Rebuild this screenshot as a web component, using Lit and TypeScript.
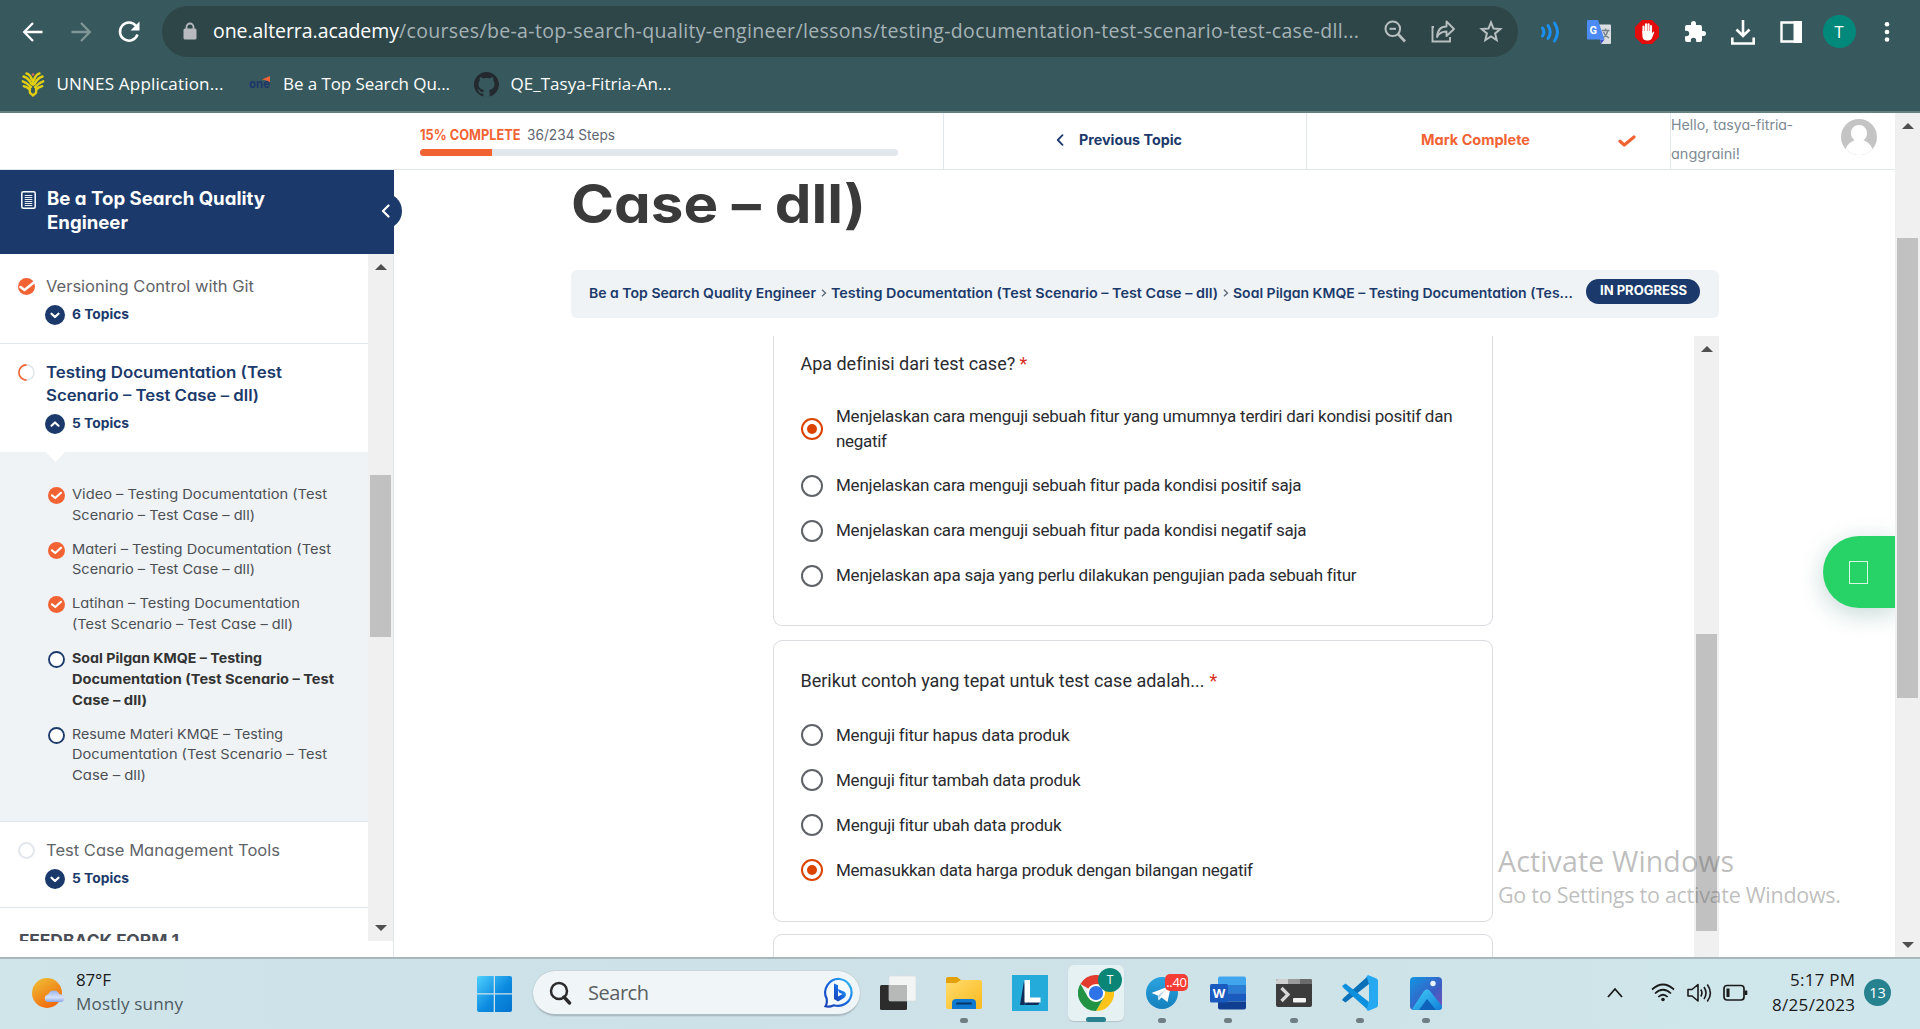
import { LitElement, html, css, nothing } from "lit";
import { customElement } from "lit/decorators.js";

/**
 * One line of text that fills a given width. The glyphs are tracked by default;
 * where --stretch is set they are widened instead.
 */
@customElement("fit-text")
class FitText extends LitElement {
  static properties = { text: {}, w: { type: Number } };
  declare text: string;
  declare w: number;
  static styles = css`
    :host { display: block; flex: none; white-space: pre; }
    span { display: inline-block; vertical-align: top; line-height: inherit; transform-origin: 0 50%; }
  `;
  render() {
    return html`<span>${this.text}</span>`;
  }
  updated() {
    const s = this.renderRoot.querySelector("span") as HTMLElement;
    this.style.width = `${this.w}px`;
    s.style.letterSpacing = "0px";
    s.style.transform = "none";
    const natural = s.getBoundingClientRect().width;
    if (getComputedStyle(this).getPropertyValue("--stretch").trim() === "1") {
      s.style.transform = `scaleX(${(this.w / natural).toFixed(5)})`;
      return;
    }
    const n = Math.max(1, [...this.text].length - 1);
    s.style.letterSpacing = `${((this.w - natural) / n).toFixed(4)}px`;
  }
}

const fit = (text: string, w: number, cls = "") => html`<fit-text class=${cls} .text=${text} .w=${w}></fit-text>`;

type Line = [string, number];

const icons = {
  back: html`<svg width="24" height="24" viewBox="0 0 24 24"><path d="M21.500 12H3.500M12 3 3.200 12 12 21" fill="none" stroke="#fff" stroke-width="2.300"/></svg>`,
  fwd: html`<svg width="24" height="24" viewBox="0 0 24 24"><path d="M2.500 12H20.500M12 3 20.800 12 12 21" fill="none" stroke="#809698" stroke-width="2.300"/></svg>`,
  reload: html`<svg width="26" height="26" viewBox="0 0 26 26"><path d="M21.500 15.500A9 9 0 1 1 20 7" fill="none" stroke="#fff" stroke-width="2.500"/><path d="M23.500 2.500V11.500H14.500Z" fill="#fff"/></svg>`,
  lock: html`<svg width="14" height="18" viewBox="0 0 14 18"><path d="M3.500 8V5a3.500 3.500 0 0 1 7 0V8" fill="none" stroke="#b8babf" stroke-width="1.800"/><rect x=".5" y="6.500" width="13" height="11" rx="1.500" fill="#b8babf"/></svg>`,
  zoomOut: html`<svg width="24" height="24" viewBox="0 0 24 24" fill="none" stroke="#b7bfc0" stroke-width="2"><circle cx="9.800" cy="9.800" r="7.300"/><path d="M15 15 22 22.500" stroke-width="2.600"/><path d="M6.500 9.800H13"/></svg>`,
  share: html`<svg width="26" height="26" viewBox="0 0 26 26" fill="none" stroke="#b7bfc0" stroke-width="1.900"><path d="M4 9H2.500V23.500H20V19"/><path d="M7 19C7.500 12 11 8.500 16.500 8.500V3.500L24 11 16.500 18V13.500C12 13.500 9 15 7 19Z" stroke-linejoin="round"/></svg>`,
  star: html`<svg width="24" height="24" viewBox="0 0 24 24" fill="none" stroke="#b7bfc0" stroke-width="2"><path d="M12 3.300 14.500 9.500 21.300 10 16.100 14.400 17.700 21 12 17.400 6.300 21 7.900 14.400 2.700 10 9.500 9.500Z"/></svg>`,
  waves: html`<svg width="24" height="24" viewBox="0 0 24 24" fill="none" stroke="#1a90f5" stroke-width="3" stroke-linecap="round"><path d="M3.500 8Q6.500 12 3.500 16M9 5.500Q13.500 12 9 18.500M15.500 3Q21.500 12 15.500 21"/></svg>`,
  translate: html`<svg width="26" height="26" viewBox="0 0 26 26"><path d="M11 5.500H24a1 1 0 0 1 1 1V24a1 1 0 0 1-1 1H15Z" fill="#dadce0"/><path d="M14 20.500H18.500L15 25Z" fill="#3a50c0"/><path d="M2 1H12L18.500 20.500H2a1 1 0 0 1-1-1V2A1 1 0 0 1 2 1Z" fill="#4c8bf5"/><text x="3.500" y="14.500" font-family="Roboto" font-weight="700" font-size="11" fill="#fff">G</text><path d="M16 11.500H23.500M19.500 9.500V11.500M22 11.500Q21 16 17.500 18.500M17.500 13Q19 17 23 19" fill="none" stroke="#6f7f84" stroke-width="1.300"/></svg>`,
  block: html`<svg width="26" height="26" viewBox="0 0 26 26"><path d="M8 1H18L25 8V18L18 25H8L1 18V8Z" fill="#e40d0d"/><g stroke="#fff" stroke-width="2.100" stroke-linecap="round"><path d="M9.500 14V7.500M12 13V5.200M14.500 13V5.200M17 14V7"/></g><path d="M8.400 12H18V14.500L19.300 12.500 20.300 13.300 17.800 19.500Q16.800 21.500 14 21.500H12.500Q8.400 21.300 8.400 16.500Z" fill="#fff"/></svg>`,
  puzzle: html`<svg width="24" height="24" viewBox="0 0 24 24"><path d="M20.500 11H19V7a2 2 0 0 0-2-2h-4V3.500a2.500 2.500 0 0 0-5 0V5H4a2 2 0 0 0-2 2v3.800h1.500a2.700 2.700 0 0 1 0 5.400H2V20a2 2 0 0 0 2 2h3.800v-1.500a2.700 2.700 0 0 1 5.400 0V22H17a2 2 0 0 0 2-2v-4h1.500a2.500 2.500 0 0 0 0-5z" fill="#fff"/></svg>`,
  download: html`<svg width="26" height="26" viewBox="0 0 26 26" fill="none" stroke="#fff" stroke-width="2.600"><path d="M13 1V16M6.500 10.500 13 17 19.500 10.500M2.300 18.500V24.500H23.700V18.500"/></svg>`,
  panel: html`<svg width="22" height="22" viewBox="0 0 22 22"><path d="M1.500 1.500H20.500V20.500H1.500Z" fill="none" stroke="#fff" stroke-width="2.400"/><path d="M13.500 0H22V22H13.500Z" fill="#fff"/></svg>`,
  dots: html`<svg width="6" height="22" viewBox="0 0 6 22" fill="#fff"><circle cx="3" cy="3.300" r="2.300"/><circle cx="3" cy="11" r="2.300"/><circle cx="3" cy="18.500" r="2.300"/></svg>`,
  unnes: html`<svg width="24" height="26" viewBox="0 0 24 26" fill="none" stroke="#e3cf12" stroke-width="2.400" stroke-linecap="round"><path d="M11 9Q9 3 5.500 2.500M10.500 13Q7 6.500 2.500 5.500M10 16Q6 11.500 1.800 10.300M9 18.500Q6 16 2.800 15.200M13 9Q15 3 18.500 2.500M13.500 13Q17 6.500 21.500 5.500M14 16Q18 11.500 22.200 10.300M15 18.500Q18 16 21.200 15.200"/><path d="M8.500 17 9 22 12 24.500 15 22 15.500 17" stroke-width="2.300"/><path d="M12 9V14" stroke-width="2.200"/><circle cx="12" cy="3.500" r="1.300" fill="#e06a5a" stroke="none"/></svg>`,
  one: html`<svg width="24" height="24" viewBox="0 0 24 24"><text x="1" y="15.500" font-family="Inter" font-weight="700" font-size="12.500" textLength="21" lengthAdjust="spacingAndGlyphs" fill="#1c3768">one</text><path d="M14 7.500 22 4V10L18.500 8.500Z" fill="#ef6335"/></svg>`,
  github: html`<svg width="25" height="25" viewBox="0 0 16 16"><path fill="#24292f" d="M8 0C3.580 0 0 3.580 0 8c0 3.540 2.290 6.530 5.470 7.590.4.070.55-.17.55-.38 0-.19-.01-.82-.01-1.490-2.010.37-2.530-.49-2.690-.94-.09-.23-.48-.94-.82-1.130-.28-.15-.68-.52-.01-.53.63-.01 1.080.58 1.230.82.720 1.210 1.870.87 2.330.66.070-.52.280-.87.510-1.070-1.780-.2-3.640-.89-3.640-3.950 0-.87.310-1.590.82-2.150-.08-.2-.36-1.020.08-2.120 0 0 .67-.21 2.200.82.640-.18 1.320-.27 2-.27s1.360.09 2 .27c1.530-1.040 2.200-.82 2.200-.82.440 1.100.16 1.920.08 2.120.51.560.82 1.270.82 2.150 0 3.070-1.870 3.750-3.650 3.950.29.250.54.730.54 1.480 0 1.070-.01 1.930-.01 2.200 0 .21.150.46.550.38A8.010 8.010 0 0 0 16 8c0-4.420-3.580-8-8-8z"/></svg>`,
  check: html`<svg width="18" height="12" viewBox="0 0 18 12"><path d="M2 6.300 6.300 10 16 2" fill="none" stroke="#f26334" stroke-width="3.200" stroke-linecap="round" stroke-linejoin="round"/></svg>`,
  doc: html`<svg width="15" height="18" viewBox="0 0 15 18" fill="none" stroke="#fff"><rect x=".8" y=".8" width="13.400" height="16.400" rx="1.500" stroke-width="1.500"/><path d="M3.700 4.500H11.300M3.700 6.500H11.300M3.700 8.500H11.300M3.700 10.500H11.300M3.700 12.500H11.300M3.700 14.500H11.300" stroke-width=".9"/></svg>`,
  done: html`<svg width="17" height="17" viewBox="0 0 17 17"><circle cx="8.500" cy="8.500" r="8.500" fill="#f26334"/><path d="M4 8.300 7.300 11 13 5.800" fill="none" stroke="#fff" stroke-width="2.200" stroke-linecap="round" stroke-linejoin="round"/></svg>`,
  doneBig: html`<svg width="17" height="17" viewBox="0 0 17 17"><circle cx="8.500" cy="8.500" r="8.500" fill="#f26334"/><path d="M2.500 9 6.500 12 15.500 4.800" fill="none" stroke="#fff" stroke-width="2.600" stroke-linecap="round" stroke-linejoin="round"/></svg>`,
  half: html`<svg width="17" height="17" viewBox="0 0 17 17" fill="none" stroke-width="1.600"><circle cx="8.500" cy="8.500" r="7.600" stroke="#e2e7ed"/><path d="M8.500 .9A7.600 7.600 0 0 0 8.500 16.100" stroke="#f26334"/></svg>`,
  none: html`<svg width="17" height="17" viewBox="0 0 17 17"><circle cx="8.500" cy="8.500" r="7.500" fill="#fff" stroke="#e2e7ed" stroke-width="2"/></svg>`,
  todo: html`<svg width="17" height="17" viewBox="0 0 17 17"><circle cx="8.500" cy="8.500" r="7.500" fill="#fff" stroke="#1b3a6b" stroke-width="1.900"/></svg>`,
  up: html`<svg width="20" height="20" viewBox="0 0 20 20"><circle cx="10" cy="10" r="10" fill="#1b3a6b"/><path d="M6.500 11.700 10 8.500 13.500 11.700" fill="none" stroke="#fff" stroke-width="2.200" stroke-linecap="round" stroke-linejoin="round"/></svg>`,
  down: html`<svg width="20" height="20" viewBox="0 0 20 20"><circle cx="10" cy="10" r="10" fill="#1b3a6b"/><path d="M6.500 8.700 10 12 13.500 8.700" fill="none" stroke="#fff" stroke-width="2.200" stroke-linecap="round" stroke-linejoin="round"/></svg>`,
  chevL: html`<svg width="9" height="14" viewBox="0 0 9 14"><path d="M7.500 1.500 2 7 7.500 12.500" fill="none" stroke="currentColor" stroke-width="2.200" stroke-linecap="round" stroke-linejoin="round"/></svg>`,
  chevThin: html`<svg width="8" height="12" viewBox="0 0 8 12"><path d="M6.500 1.200 1.800 6 6.500 10.800" fill="none" stroke="currentColor" stroke-width="1.800" stroke-linecap="round" stroke-linejoin="round"/></svg>`,
  person: html`<svg width="36" height="36" viewBox="0 0 36 36"><defs><clipPath id="av"><circle cx="18" cy="18" r="18"/></clipPath></defs><g clip-path="url(#av)"><path d="M0 0H36V36H0Z" fill="#c4c4c4"/><path d="M18 6C22.500 6 26 9.500 26 14 26 17.500 24.500 20 22.500 21.200 26 22.500 29.500 25 31 29L32.500 36H3.500L5 29C6.500 25 10 22.500 13.500 21.200 11.500 20 10 17.500 10 14 10 9.500 13.500 6 18 6Z" fill="#fff"/></g></svg>`,
  sun: html`<svg width="34" height="32" viewBox="0 0 34 32"><defs><linearGradient id="sn" x1="0" y1="0" x2=".6" y2="1"><stop offset="0" stop-color="#efc437"/><stop offset="1" stop-color="#f06a0c"/></linearGradient><linearGradient id="cl" x1="0" y1="0" x2="0" y2="1"><stop offset="0" stop-color="#9bb4ee"/><stop offset=".6" stop-color="#d6e2fb"/><stop offset="1" stop-color="#8ba6e6"/></linearGradient></defs><circle cx="15" cy="16" r="15" fill="url(#sn)"/><path d="M15.500 25a4 4 0 0 1 .7-7.700 6 6 0 0 1 11.200 0A4 4 0 0 1 29.500 25Z" fill="url(#cl)"/></svg>`,
  win: html`<svg width="35" height="36" viewBox="0 0 35 36"><defs><linearGradient id="wn" x1="0" y1="0" x2="1" y2="1"><stop offset="0" stop-color="#4fd0fd"/><stop offset=".55" stop-color="#0c8be0"/><stop offset="1" stop-color="#0473cf"/></linearGradient></defs><path fill="url(#wn)" d="M2 0H16.700V17.200H0V2A2 2 0 0 1 2 0ZM18 0H33A2 2 0 0 1 35 2V17.200H18ZM0 18.600H16.700V36H2A2 2 0 0 1 0 34ZM18 18.600H35V34A2 2 0 0 1 33 36H18Z"/></svg>`,
  search: html`<svg width="24" height="24" viewBox="0 0 24 24" fill="none" stroke="#2b2b2b"><circle cx="11" cy="10" r="8" stroke-width="2.500"/><path d="M16 16 21.500 22" stroke-width="3.400" stroke-linecap="round"/></svg>`,
  bing: html`<svg width="32" height="32" viewBox="0 0 32 32"><defs><linearGradient id="bg" x1="0" y1="1" x2="1" y2="0"><stop offset="0" stop-color="#1a3fb4"/><stop offset=".5" stop-color="#1767e0"/><stop offset="1" stop-color="#35c4f2"/></linearGradient></defs><path d="M16.500 2A13.500 13.500 0 1 1 11 28.300Q6 30.500 2.500 29.300 4.500 26 3.600 21.500A13.500 13.500 0 0 1 16.500 2Z" fill="#f4fbff" stroke="url(#bg)" stroke-width="2.200"/><path d="M11 6.500 15 8.200V19.500L19.500 17 16 15.500 14.800 12 21.500 14.800Q23 15.800 23 18 22.500 20 21 21L15 24.500 11 22Z" fill="url(#bg)"/></svg>`,
};

const appIcons = {
  tasks: html`<svg width="36" height="36" viewBox="0 0 36 36"><rect x="0" y="10" width="27" height="25" rx="1.500" fill="#2c2c2c"/><rect x="9" y="1" width="27" height="25" rx="1.500" fill="#f3f4f4" stroke="#d5dcde" stroke-width=".6"/><path d="M9 10H27V26H9Z" fill="#b7b8b8"/></svg>`,
  files: html`<svg width="36" height="36" viewBox="0 0 36 36"><defs><linearGradient id="fl" x1="0" y1="0" x2="1" y2="1"><stop offset="0" stop-color="#ffdc6e"/><stop offset="1" stop-color="#fbb91c"/></linearGradient></defs><path d="M0 4A2 2 0 0 1 2 2H11L15 5 13 9H0Z" fill="#e3a008"/><path d="M0 8H10L15 5H34A2 2 0 0 1 36 7V32A2 2 0 0 1 34 34H2A2 2 0 0 1 0 32Z" fill="url(#fl)"/><path d="M6 34V28A4 4 0 0 1 10 24H26A4 4 0 0 1 30 28V34Z" fill="#1179cf"/><path d="M11 28.500H25" stroke="#07366b" stroke-width="1.800" stroke-linecap="round"/></svg>`,
  lapp: html`<svg width="36" height="36" viewBox="0 0 36 36"><path d="M0 0H36V36H0Z" fill="#25abda"/><path d="M12 6 8 30H12L16 24Z" fill="#0d2c58"/><path d="M12 30 17 25H28V27L26 30Z" fill="#0d2c58"/><path d="M12.500 5H18V22.500H28.500V27.500H12.500Z" fill="#fff"/></svg>`,
  chrome: html`<svg width="36" height="36" viewBox="0 0 48 48"><path d="M24 24 3.200 12A24 24 0 0 1 44.800 12Z" fill="#e33b2e"/><path d="M24 12H44.800A24 24 0 0 1 24 48L34.400 30Z" fill="#fcc419"/><path d="M3.200 12 13.600 30 34.400 30 24 48A24 24 0 0 1 3.200 12Z" fill="#229342"/><circle cx="24" cy="24" r="12" fill="#fff"/><circle cx="24" cy="24" r="9.500" fill="#2f73e8"/></svg>`,
  telegram: html`<svg width="34" height="34" viewBox="0 0 34 34"><defs><linearGradient id="tg" x1="0" y1="0" x2="0" y2="1"><stop offset="0" stop-color="#2ba3df"/><stop offset="1" stop-color="#1480bd"/></linearGradient></defs><circle cx="17" cy="17" r="16" fill="url(#tg)"/><path d="M6.500 17 26 9.500 22.500 26 16.500 21.500 13.500 24.500 12.800 19.500Z" fill="#fff"/><path d="M13 19.500 22 12.500 15 20.500 13.700 24Z" fill="#b5d6e8"/></svg>`,
  word: html`<svg width="36" height="34" viewBox="0 0 36 34"><path d="M8 2A2 2 0 0 1 10 .5H34A2 2 0 0 1 36 2.500V9H8Z" fill="#41a5ee"/><path d="M8 9H36V17.200H8Z" fill="#2b7cd3"/><path d="M8 17.200H36V25.500H8Z" fill="#185abd"/><path d="M8 25.500H36V31.500A2 2 0 0 1 34 33.500H10A2 2 0 0 1 8 31.500Z" fill="#103f91"/><rect x="0" y="8" width="18" height="18.500" rx="1.500" fill="#185abd"/><text x="9" y="22" text-anchor="middle" font-family="Open Sans" font-weight="700" font-size="13" fill="#fff">W</text></svg>`,
  term: html`<svg width="36" height="28" viewBox="0 0 36 28"><rect width="36" height="28" rx="2" fill="#3c3c3c"/><path d="M2 0H12V5H0V2A2 2 0 0 1 2 0Z" fill="#cfcfcf"/><path d="M12 0H24V5H12Z" fill="#9a9a9a"/><path d="M24 0H34A2 2 0 0 1 36 2V5H24Z" fill="#6b6b6b"/><path d="M5.500 9 12 15.500 5.500 22" fill="none" stroke="#d8d8d8" stroke-width="3.200"/><rect x="17" y="19" width="13" height="4.500" rx="1" fill="#f4f4f4"/></svg>`,
  code: html`<svg width="36" height="36" viewBox="0 0 36 36"><path d="M26 1 1.500 23 0 25 3.500 27.500 27 9Z" fill="#0a70b8"/><path d="M26 35 1.500 13 0 11 3.500 8.500 27 27Z" fill="#0c8fdc"/><path d="M26 0 34.500 3.500Q36 4.200 36 6V30Q36 31.800 34.500 32.500L26 36 24.500 34.500 27 27V9L24.500 1.500Z" fill="#27a9f2"/></svg>`,
  photos: html`<svg width="32" height="33" viewBox="0 0 32 33"><defs><linearGradient id="ph" x1="0" y1="0" x2="1" y2="1"><stop offset="0" stop-color="#1296e2"/><stop offset=".6" stop-color="#3a5ec4"/><stop offset="1" stop-color="#7b4fb8"/></linearGradient><linearGradient id="pm" x1="0" y1="0" x2="1" y2="1"><stop offset="0" stop-color="#45cdf8"/><stop offset="1" stop-color="#1080d8"/></linearGradient></defs><rect width="32" height="33" rx="4" fill="url(#ph)"/><path d="M2 32 14 14Q17 10.500 20 14L32 29V30A3 3 0 0 1 29 33H4Z" fill="url(#pm)"/><path d="M9 33 17 22 26 33Z" fill="#0f63bb"/><circle cx="23" cy="6.500" r="2.700" fill="#e8f3fd"/></svg>`,
};

const crumbs: Line[] = [
  ["Be a Top Search Quality Engineer", 227],
  ["Testing Documentation (Test Scenario – Test Case – dll)", 387],
  ["Soal Pilgan KMQE – Testing Documentation (Tes…", 340],
];

const topics: { icon: unknown; bold?: boolean; lines: Line[] }[] = [
  { icon: icons.done, lines: [["Video – Testing Documentation (Test", 255], ["Scenario – Test Case – dll)", 183]] },
  { icon: icons.done, lines: [["Materi – Testing Documentation (Test", 259], ["Scenario – Test Case – dll)", 183]] },
  { icon: icons.done, lines: [["Latihan – Testing Documentation", 228], ["(Test Scenario – Test Case – dll)", 221]] },
  { icon: icons.todo, bold: true, lines: [["Soal Pilgan KMQE – Testing", 190], ["Documentation (Test Scenario – Test", 262], ["Case – dll)", 75]] },
  { icon: icons.todo, lines: [["Resume Materi KMQE – Testing", 211], ["Documentation (Test Scenario – Test", 255], ["Case – dll)", 74]] },
];

const questions: { title: Line; cls: string; options: { on?: boolean; lines: Line[] }[] }[] = [
  {
    title: ["Apa definisi dari test case?", 214], cls: "cut",
    options: [
      { on: true, lines: [["Menjelaskan cara menguji sebuah fitur yang umumnya terdiri dari kondisi positif dan", 616], ["negatif", 51]] },
      { lines: [["Menjelaskan cara menguji sebuah fitur pada kondisi positif saja", 465]] },
      { lines: [["Menjelaskan cara menguji sebuah fitur pada kondisi negatif saja", 470]] },
      { lines: [["Menjelaskan apa saja yang perlu dilakukan pengujian pada sebuah fitur", 520]] },
    ],
  },
  {
    title: ["Berikut contoh yang tepat untuk test case adalah...", 404], cls: "whole",
    options: [
      { lines: [["Menguji fitur hapus data produk", 233]] },
      { lines: [["Menguji fitur tambah data produk", 244]] },
      { lines: [["Menguji fitur ubah data produk", 225]] },
      { on: true, lines: [["Memasukkan data harga produk dengan bilangan negatif", 417]] },
    ],
  },
];

const arrow = (up: boolean) =>
  html`<svg class="arrow" width="12" height="6" viewBox="0 0 12 6"><path d=${up ? "M6 0 12 6H0Z" : "M0 0H12L6 6Z"} fill="#505050"/></svg>`;

@customElement("app-root")
class AppRoot extends LitElement {
  static styles = css`
    :host { display: block; width: 1920px; height: 1029px; overflow: hidden; position: relative; background: #fff; font-family: "Open Sans", "Noto Sans", sans-serif; }
    * { box-sizing: border-box; }
    svg { display: block; flex: none; }
    .row { display: flex; }
    .chrome { height: 113px; background: #37595d; border-bottom: 2px solid #64807f; display: flex; flex-direction: column; }
    .tools { display: flex; align-items: center; height: 57px; padding: 6px 9px 0; }
    .cell { width: 48px; flex: none; display: flex; justify-content: center; align-items: center; }
    .omni { display: flex; align-items: center; width: 1356px; height: 51px; margin: 0 9px; padding: 0 3px 0 21px; border-radius: 26px; background: #2f4649; font-size: 19.500px; line-height: 30px; color: #a5b3b6; }
    .omni .host { color: #fff; margin-left: 16px; }
    .omni .path { margin-right: 12px; }
    .omni svg, .omni fit-text { margin-bottom: 1px; }
    .face { width: 33px; height: 33px; border-radius: 50%; background: #00897b; color: #fff; font-size: 16.500px; line-height: 33px; text-align: center; }
    .marks { display: flex; align-items: center; height: 54px; padding-left: 21px; color: #fff; font-size: 17px; line-height: 26px; }
    .marks svg { margin-right: 11.500px; }
    .marks .m { display: flex; align-items: center; margin-right: 24px; }
    .pop { font-family: Inter, "Open Sans", sans-serif; font-feature-settings: "cv11"; --stretch: 1; }
    .page { display: flex; height: 844px; }
    .left { width: 1895px; flex: none; }
    .top { display: flex; height: 57px; border-bottom: 1px solid #e2e7ed; font-size: 14px; }
    .prog { width: 943px; padding: 12px 0 0 420px; line-height: 20px; }
    .pct { color: #f26334; font-weight: 700; }
    .steps { color: #5f6671; margin-left: 6px; }
    .bar { width: 478px; height: 7px; margin-top: 4px; border-radius: 4px; background: #e2e7ed; overflow: hidden; }
    .bar div { height: 7px; width: 72px; background: #f26334; }
    .tb { display: flex; align-items: center; border-left: 1px solid #e2e7ed; line-height: 20px; font-weight: 700; }
    .prev { width: 363px; padding-left: 112px; color: #1b3a6b; padding-bottom: 3px; }
    .prev fit-text { margin: 1px 0 0 15px; }
    .mark { width: 364px; padding-left: 114px; color: #f26334; }
    .mark fit-text { margin-bottom: 3px; }
    .mark svg { margin-left: 88px; }
    .hello { width: 225px; font-weight: 400; color: #7d8a92; line-height: 29px; align-items: flex-start; }
    .hello .n { margin-top: -3px; width: 170px; }
    .hello svg { margin-top: 6px; }
    .body { display: flex; height: 787px; }
    .side { width: 394px; flex: none; border-right: 1px solid #e2e7ed; position: relative; }
    .head { display: flex; height: 84px; width: 394px; padding: 16px 0 0 21px; background: #1b3a6b; color: #fff; font-size: 18.500px; font-weight: 700; line-height: 24px; }
    .head svg { margin: 5px 11px 0 0; }
    .tog { position: absolute; left: 366px; top: 23px; width: 36px; height: 36px; border-radius: 50%; background: #1b3a6b; color: #fff; padding: 11px 0 0 15px; z-index: 2; }
    .scroll { display: flex; height: 687px; overflow: hidden; }
    .list { width: 368px; flex: none; }
    .lesson { display: grid; grid-template-columns: 17px 1fr; column-gap: 11px; padding: 17px 0 18px 18px; color: #5f6468; font-size: 15.500px; line-height: 23px; font-weight: 400; border-bottom: 1px solid #e2e7ed; }
    .lesson.first { padding-top: 21px; }
    .lesson.open { border-bottom: 0; color: #1b3a6b; font-weight: 600; }
    .lesson > svg { margin-top: 3px; }
    .cnt { display: flex; align-items: center; margin: 7px 0 0 -1px; height: 20px; gap: 7px; color: #1b3a6b; font-size: 13px; line-height: 18px; font-weight: 700; }
    .cnt fit-text { margin-bottom: 2px; }
    .sub { height: 370px; padding: 32px 0 0 48px; background: #eff3f6; border-bottom: 1px solid #e2e7ed; display: flex; flex-direction: column; gap: 13.300px; position: relative; }
    .notch { position: absolute; left: 46px; top: 0; width: 19px; height: 10px; background: #fff; clip-path: polygon(0 0, 100% 0, 50% 100%); }
    .topic { display: flex; gap: 7px; color: #4b4f54; font-size: 13.500px; line-height: 20.700px; }
    .topic svg { margin-top: 3px; }
    .topic.b { font-weight: 700; color: #333; }
    .fb { padding: 21px 0 0 19px; font-size: 17px; line-height: 24px; font-weight: 700; color: #4a4e57; }
    .sb { width: 25px; flex: none; background: #f0f0f0; display: flex; flex-direction: column; align-items: center; position: relative; }
    .thumb { width: 21px; background: #c1c1c1; }
    .s1 { padding-top: 10px; } .s1 .thumb { margin-top: 205px; height: 162px; } .s1 .arrow:last-child { margin-top: 288px; }
    .s2 { padding-top: 10px; } .s2 .thumb { margin-top: 282px; height: 297px; }
    .s3 { padding-top: 10px; } .s3 .thumb { margin-top: 109px; height: 460px; } .s3 .arrow:last-child { margin-top: 244px; }
    .main { padding: 4px 0 0 177px; }
    .title { font-size: 53px; line-height: 60px; font-weight: 700; color: #3a3a3a; }
    .crumbs { display: flex; width: 1148px; height: 48px; margin-top: 36px; padding: 0 18px; border-radius: 6px; background: #eff3f6; font-size: 13.500px; line-height: 20px; color: #1b3a6b; font-weight: 600; }
    .crumbs .c { margin-top: 13px; }
    .crumbs .sep { width: 15px; margin-top: 13px; display: flex; justify-content: center; align-items: center; height: 20px; }
    .pill { margin: 9px 0 0 13px; width: 114px; height: 25px; border-radius: 13px; padding-left: 14px; background: #1b3a6b; color: #fff; font-size: 12.700px; font-weight: 700; line-height: 23px; }
    .frame { display: flex; width: 1148px; height: 621px; margin-top: 18px; overflow: hidden; font-family: Roboto, sans-serif; color: #2a2b2f; --stretch: 0; }
    .form { width: 1123px; padding-left: 202px; flex: none; }
    .card { width: 720px; border: 1px solid #dadce0; border-radius: 9px; padding: 28px 0 0 27px; }
    .card.cut { height: 290px; border-top: 0; border-radius: 0 0 9px 9px; padding-top: 16px; }
    .card.whole { height: 282px; margin: 14px 0 12px; }
    .card.next { height: 60px; }
    .q { display: flex; gap: 5px; font-size: 18px; line-height: 24px; margin-bottom: 28px; }
    .q fit-text { margin-left: -.5px; }
    .whole .q { margin-bottom: 29.500px; }
    .req { color: #d93025; }
    .opts { display: flex; flex-direction: column; gap: 20px; font-size: 17px; line-height: 25px; }
    .cut .opt:first-child { margin-bottom: -1px; }
    .opt { display: flex; align-items: center; gap: 13px; }
    .radio { width: 22px; height: 22px; flex: none; border-radius: 50%; border: 2px solid #5f6368; display: flex; align-items: center; justify-content: center; }
    .radio.on { border-color: #db4400; }
    .radio.on::after { content: ""; width: 10px; height: 10px; border-radius: 50%; background: #db4400; }
    .wa { position: absolute; left: 1823px; top: 536px; width: 72px; height: 72px; border-radius: 36px 0 0 36px; background: #27d366; box-shadow: 0 6px 24px rgba(7, 94, 84, .24); padding: 25px 0 0 26px; clip-path: inset(-50px 0 -50px -50px); }
    .wa div { width: 19px; height: 23px; border: 1.500px solid #d8f7e3; }
    .wm { position: absolute; left: 1498px; top: 842px; color: rgba(110, 110, 110, .46); font-size: 28.500px; line-height: 38px; z-index: 3; }
    .wm .s { font-size: 21.500px; line-height: 30px; }
    .task { height: 72px; border-top: 2px solid #a7b7ba; background: linear-gradient(90deg, #cfe5ea, #cde1e8 35%, #cee3e8 70%, #cfe7ec); display: flex; position: relative; color: #1a1a1a; }
    .wx { width: 477px; padding: 18px 0 0 32px; display: flex; gap: 10px; font-size: 17px; line-height: 24px; }
    .wx .t { margin-top: -9px; }
    .wx .d { color: #4e5a5f; }
    .start { padding-top: 17px; width: 56px; }
    .find { display: flex; align-items: center; width: 327px; height: 45px; margin-top: 12px; padding: 0 7px 0 15px; border-radius: 23px; background: #f0f6f8; border-bottom: 2px solid #abbcc2; box-shadow: 0 0 0 1px #c3d5da; font-size: 20px; line-height: 28px; color: #5a5f62; }
    .find fit-text { margin: 0 174px 0 16px; }
    .apps { display: flex; margin-left: 5px; }
    .app { width: 66px; height: 70px; display: flex; justify-content: center; position: relative; flex: none; padding-top: 6px; }
    .tile { width: 56px; height: 56px; border-radius: 6px; display: flex; align-items: center; justify-content: center; }
    .tile.act { background: #e6f1f3; box-shadow: 0 1px 1px #b3c5ca; }
    .app .dot { position: absolute; bottom: 6px; left: 29px; width: 8px; height: 5px; border-radius: 3px; background: #6e7e82; }
    .app .dot.act { width: 20px; left: 23px; background: #26828f; bottom: 7px; }
    .badge { position: absolute; color: #fff; text-align: center; }
    .badge.t { left: 35px; top: 9px; width: 24px; height: 24px; border-radius: 50%; background: #0b8576; font-size: 12px; line-height: 24px; }
    .badge.n { left: 36px; top: 15px; width: 23px; height: 17px; border-radius: 5px; background: #f63d35; font-size: 13px; line-height: 17px; letter-spacing: -.3px; }
    .tray { display: flex; margin-left: 148px; padding-top: 24px; }
    .tray .wifi { margin-left: 27px; }
    .tray .vol { margin-left: 11px; }
    .tray .bat { margin-left: 10px; }
    .clock { font-size: 17px; line-height: 25px; display: flex; flex-direction: column; align-items: flex-end; margin: -16px 9px 0 24px; }
    .num { width: 27px; height: 27px; border-radius: 50%; background: #26828f; color: #fff; font-size: 14.500px; line-height: 27px; text-align: center; margin-top: -4px; }
  `;

  lesson(cls: string, icon: unknown, lines: Line[], count: Line, open = false) {
    return html`<div class="lesson ${cls}">
      ${icon}
      <div>
        ${lines.map(([t, w]) => fit(t, w))}
        <div class="cnt">${open ? icons.up : icons.down}${fit(count[0], count[1])}</div>
      </div>
    </div>`;
  }

  app(icon: unknown, running = false, active = false, badge: unknown = nothing) {
    return html`<div class="app">
      <div class="tile ${active ? "act" : ""}">${icon}</div>
      ${badge}${running ? html`<div class="dot ${active ? "act" : ""}"></div>` : nothing}
    </div>`;
  }

  render() {
    const cell = (c: unknown) => html`<div class="cell">${c}</div>`;
    const sep = html`<div class="sep"><svg width="6" height="8" viewBox="0 0 6 8"><path d="M1 .8 4.500 4 1 7.200" fill="none" stroke="#5b6675" stroke-width="1.300"/></svg></div>`;
    return html`
      <div class="chrome">
        <div class="tools">
          ${cell(icons.back)}${cell(icons.fwd)}${cell(icons.reload)}
          <div class="omni">
            ${icons.lock}
            ${fit("one.alterra.academy", 186, "host")}
            ${fit("/courses/be-a-top-search-quality-engineer/lessons/testing-documentation-test-scenario-test-case-dll...", 960, "path")}
            ${cell(icons.zoomOut)}${cell(icons.share)}${cell(icons.star)}
          </div>
          ${[icons.waves, icons.translate, icons.block, icons.puzzle, icons.download, icons.panel].map(cell)}
          ${cell(html`<div class="face">T</div>`)}${cell(icons.dots)}
        </div>
        <div class="marks">
          <div class="m">${icons.unnes}${fit("UNNES Application...", 167)}</div>
          <div class="m">${icons.one}${fit("Be a Top Search Qu...", 167)}</div>
          <div class="m">${icons.github}${fit("QE_Tasya-Fitria-An...", 161)}</div>
        </div>
      </div>

      <div class="page">
        <div class="left pop">
          <div class="top">
            <div class="prog">
              <div class="row">${fit("15% COMPLETE", 100.5, "pct")}${fit("36/234 Steps", 88, "steps")}</div>
              <div class="bar"><div></div></div>
            </div>
            <div class="tb prev">${icons.chevThin}${fit("Previous Topic", 103)}</div>
            <div class="tb mark">${fit("Mark Complete", 109)}${icons.check}</div>
            <div class="tb hello"><div class="n">${fit("Hello, tasya-fitria-", 122)}${fit("anggraini!", 69)}</div>${icons.person}</div>
          </div>
          <div class="body">
            <div class="side">
              <div class="head">${icons.doc}<div>${fit("Be a Top Search Quality", 218)}${fit("Engineer", 81)}</div></div>
              <div class="tog">${icons.chevL}</div>
              <div class="scroll">
                <div class="list">
                  ${this.lesson("first", icons.doneBig, [["Versioning Control with Git", 208]], ["6 Topics", 57])}
                  ${this.lesson("open", icons.half, [["Testing Documentation (Test", 236], ["Scenario – Test Case – dll)", 213]], ["5 Topics", 57], true)}
                  <div class="sub">
                    <div class="notch"></div>
                    ${topics.map((t) => html`<div class="topic ${t.bold ? "b" : ""}">${t.icon}<div>${t.lines.map(([s, w]) => fit(s, w))}</div></div>`)}
                  </div>
                  ${this.lesson("", icons.none, [["Test Case Management Tools", 234]], ["5 Topics", 57])}
                  <div class="fb">${fit("FEEDBACK FORM 1", 160)}</div>
                </div>
                <div class="sb s1">${arrow(true)}<div class="thumb"></div>${arrow(false)}</div>
              </div>
            </div>
            <div class="main">
              <div class="title">${fit("Case – dll)", 295)}</div>
              <div class="crumbs">
                ${crumbs.map(([t, w], i) => html`${i ? sep : nothing}${fit(t, w, "c")}`)}
                <div class="pill">${fit("IN PROGRESS", 87)}</div>
              </div>
              <div class="frame">
                <div class="form">
                  ${questions.map((q) => html`<div class="card ${q.cls}">
                    <div class="q">${fit(q.title[0], q.title[1])}<span class="req">*</span></div>
                    <div class="opts">
                      ${q.options.map((o) => html`<div class="opt"><div class="radio ${o.on ? "on" : ""}"></div><div>${o.lines.map(([s, w]) => fit(s, w))}</div></div>`)}
                    </div>
                  </div>`)}
                  <div class="card next"></div>
                </div>
                <div class="sb s2">${arrow(true)}<div class="thumb"></div></div>
              </div>
            </div>
          </div>
        </div>
        <div class="sb s3">${arrow(true)}<div class="thumb"></div>${arrow(false)}</div>
      </div>

      <div class="wa"><div></div></div>
      <div class="wm">${fit("Activate Windows", 236)}${fit("Go to Settings to activate Windows.", 343, "s")}</div>

      <div class="task">
        <div class="wx">${icons.sun}<div class="t">${fit("87°F", 35)}${fit("Mostly sunny", 107, "d")}</div></div>
        <div class="start">${icons.win}</div>
        <div class="find">${icons.search}${fit("Search", 61)}${icons.bing}</div>
        <div class="apps">
          ${this.app(appIcons.tasks)}
          ${this.app(appIcons.files, true)}
          ${this.app(appIcons.lapp)}
          ${this.app(appIcons.chrome, true, true, html`<div class="badge t">T</div>`)}
          ${this.app(appIcons.telegram, true, false, html`<div class="badge n">..40</div>`)}
          ${this.app(appIcons.word, true)}
          ${this.app(appIcons.term, true)}
          ${this.app(appIcons.code, true)}
          ${this.app(appIcons.photos, true)}
        </div>
        <div class="tray">
          <svg width="16" height="18" viewBox="0 0 16 18"><path d="M1 14 8 6 15 14" fill="none" stroke="#1a1a1a" stroke-width="1.800"/></svg>
          <svg class="wifi" width="26" height="20" viewBox="0 0 26 20" fill="none" stroke="#1a1a1a" stroke-width="1.700"><path d="M2 6.500Q13-3.500 24 6.500M5 10.500Q13 3 21 10.500M8.300 14Q13 9.500 17.700 14"/><circle cx="13" cy="16.500" r="1.800" fill="#1a1a1a" stroke="none"/></svg>
          <svg class="vol" width="26" height="20" viewBox="0 0 26 20" fill="none" stroke="#1a1a1a" stroke-width="1.600"><path d="M1 6.500H5L11 1.500V18L5 13H1Z" stroke-linejoin="round"/><path d="M13.800 6.500Q16 10 13.800 13.500M17 4Q21 10 17 16M20.300 1.500Q26.500 10 20.300 18.500"/></svg>
          <svg class="bat" width="25" height="20" viewBox="0 0 25 20" fill="none" stroke="#1a1a1a" stroke-width="1.700"><rect x="1" y="2.500" width="20" height="14.500" rx="3"/><path d="M5 5.500V14" stroke-width="3"/><path d="M23 7.500V12" stroke-width="2.600"/></svg>
          <div class="clock">${fit("5:17 PM", 65)}${fit("8/25/2023", 83)}</div>
          <div class="num">13</div>
        </div>
      </div>
    `;
  }
}
